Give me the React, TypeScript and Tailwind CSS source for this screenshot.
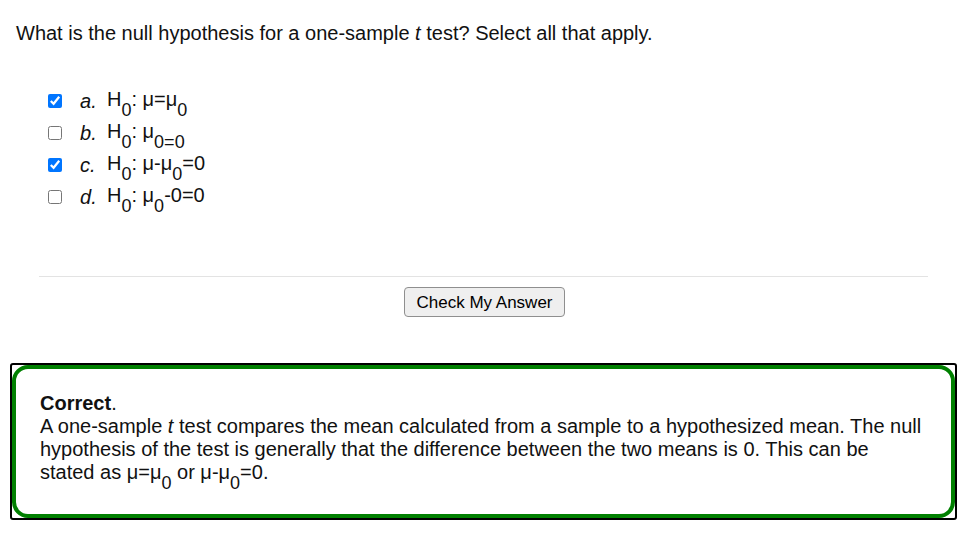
import { ReactNode } from "react";

interface OptionProps {
    letter: string;
    checked: boolean;
    children: ReactNode;
}

function Option({ letter, checked, children }: OptionProps) {
    return (
        <label className="flex items-center h-[32px]">
            <input
                type="checkbox"
                defaultChecked={checked}
                className="w-[14px] h-[14px] m-0 accent-[#0075ff]"
            />
            <span className="italic ml-[18px] w-[27px]">{letter}.</span>
            <span>{children}</span>
        </label>
    );
}

const Sub = ({ children }: { children: ReactNode }) => (
    <sub className="text-[18px] align-[-5px] leading-none">{children}</sub>
);

export default function App() {
    return (
        <div className="w-[971px] h-[539px] bg-white text-[#111] font-['Liberation_Sans',Arial,sans-serif] text-[20px] leading-[23px]">
            {/* Question */}
            <p className="pt-[22px] pl-4">
                What is the null hypothesis for a one-sample <i>t</i> test? Select all that apply.
            </p>

            {/* Options */}
            <div className="mt-[40px] pl-[48px] flex flex-col">
                <Option letter="a" checked>
                    H<Sub>0</Sub>: μ=μ<Sub>0</Sub>
                </Option>
                <Option letter="b" checked={false}>
                    H<Sub>0</Sub>: μ<Sub>0=0</Sub>
                </Option>
                <Option letter="c" checked>
                    H<Sub>0</Sub>: μ-μ<Sub>0</Sub>=0
                </Option>
                <Option letter="d" checked={false}>
                    H<Sub>0</Sub>: μ<Sub>0</Sub>-0=0
                </Option>
            </div>

            {/* Divider + button */}
            <div className="mx-[39px] w-[889px] mt-[63px] border-t border-[#e3e3e3]" />
            <div className="flex justify-center mt-[10px] pr-[2px]">
                <button className="w-[161px] h-[30px] text-[17px] bg-[#efefef] border border-[#8f8f8f] rounded-[4px] text-black">
                    Check My Answer
                </button>
            </div>

            {/* Feedback */}
            <div className="ml-[10px] mt-[46px] w-[947px] h-[157px] border-2 border-black rounded-[3px] bg-white">
                <div className="h-full border-4 border-[#008000] rounded-[16px] pt-[23px] pl-[24px] pr-[28px]">
                    <p>
                        <b>Correct</b>.
                    </p>
                    <p>
                        A one-sample <i>t</i> test compares the mean calculated from a sample to a hypothesized mean. The null
                        hypothesis of the test is generally that the difference between the two means is 0. This can be
                        stated as μ=μ<Sub>0</Sub> or μ-μ<Sub>0</Sub>=0.
                    </p>
                </div>
            </div>
        </div>
    );
}
